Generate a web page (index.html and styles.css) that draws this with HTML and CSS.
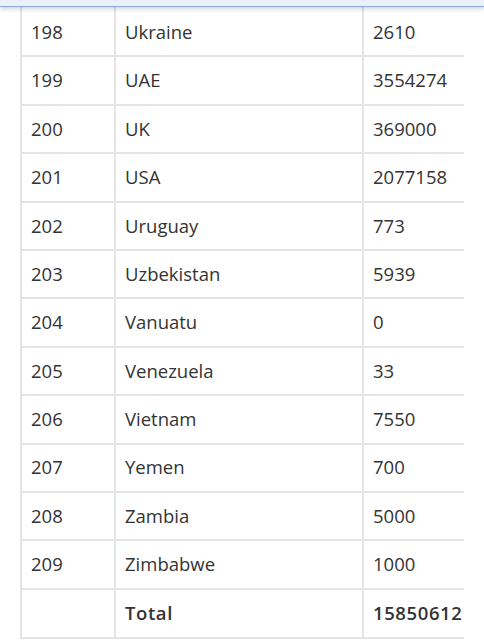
FILE: index.html
```html
<!DOCTYPE html>
<html>
<head>
<meta charset="utf-8">
<link rel="stylesheet" href="styles.css">
</head>
<body>
<div class="topbar"></div>
<div class="wrap">
<table class="data">
<tbody>
<tr><td class="c1">198</td><td class="c2">Ukraine</td><td class="c3">2610</td></tr>
<tr><td class="c1">199</td><td class="c2">UAE</td><td class="c3">3554274</td></tr>
<tr><td class="c1">200</td><td class="c2">UK</td><td class="c3">369000</td></tr>
<tr><td class="c1">201</td><td class="c2">USA</td><td class="c3">2077158</td></tr>
<tr><td class="c1">202</td><td class="c2">Uruguay</td><td class="c3">773</td></tr>
<tr><td class="c1">203</td><td class="c2">Uzbekistan</td><td class="c3">5939</td></tr>
<tr><td class="c1">204</td><td class="c2">Vanuatu</td><td class="c3">0</td></tr>
<tr><td class="c1">205</td><td class="c2">Venezuela</td><td class="c3">33</td></tr>
<tr><td class="c1">206</td><td class="c2">Vietnam</td><td class="c3">7550</td></tr>
<tr><td class="c1">207</td><td class="c2">Yemen</td><td class="c3">700</td></tr>
<tr><td class="c1">208</td><td class="c2">Zambia</td><td class="c3">5000</td></tr>
<tr><td class="c1">209</td><td class="c2">Zimbabwe</td><td class="c3">1000</td></tr>
<tr class="total"><td class="c1"></td><td class="c2">Total</td><td class="c3">15850612</td></tr>
</tbody>
</table>
</div>
</body>
</html>
```
FILE: styles.css
```css
html, body {
  margin: 0;
  padding: 0;
  background: #ffffff;
  overflow: hidden;
}
body {
  font-family: "Open Sans", "DejaVu Sans", sans-serif;
  color: #333333;
  height: 640px;
}
.topbar {
  position: absolute;
  top: 0;
  left: 0;
  right: 0;
  height: 6px;
  background: #e9f1fc;
  border-bottom: 1px solid #8eaadf;
  box-shadow: 0 2px 4px rgba(60, 80, 120, 0.25);
  z-index: 2;
}
.wrap {
  padding: 7px 0 0 20px;
  width: 444px;
}
.data {
  border-collapse: collapse;
  width: 444px;
  table-layout: fixed;
  font-size: 18.5px;
}
.data td {
  border: 2px solid #e4e4e4;
  height: 46.4px;
  padding: 0 8px 0 9px;
  vertical-align: middle;
  line-height: 1;
}
.data tr:first-child td {
  border-top-color: transparent;
}
.data td.c3 {
  border-right: none;
}
.data .c1 { width: 75px; }
.data .c2 { width: 229px; }
.data .c3 { width: auto; }
.total td {
  font-weight: 600;
  letter-spacing: 0.6px;
  height: 47px;
}
```
